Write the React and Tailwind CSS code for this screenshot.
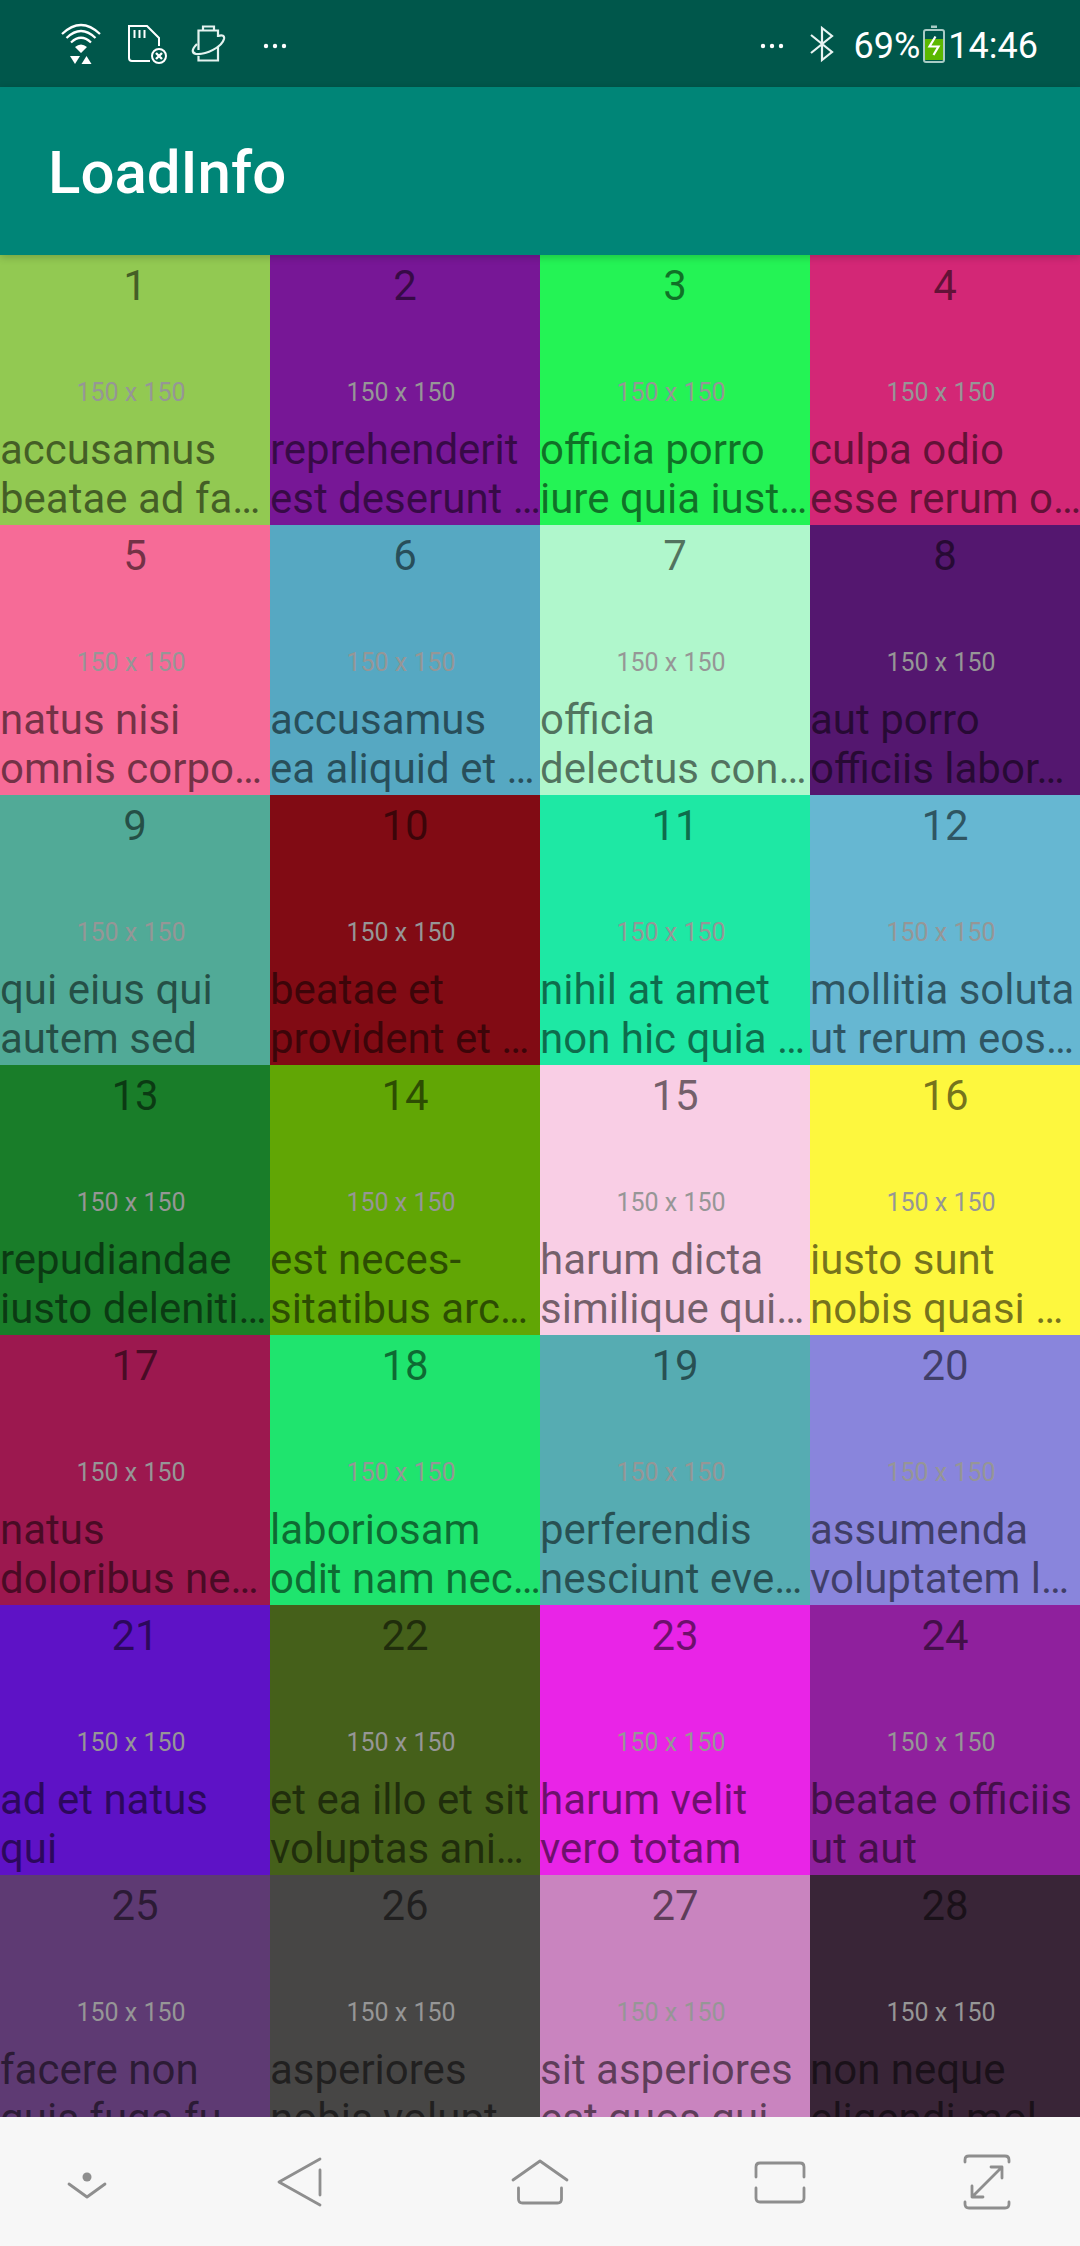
import React from "react";

const photos = [
  ["#92c952", "accusamus", "beatae ad fa…"],
  ["#771796", "reprehenderit", "est deserunt …"],
  ["#24f355", "officia porro", "iure quia iust…"],
  ["#d32776", "culpa odio", "esse rerum o…"],
  ["#f66b97", "natus nisi", "omnis corpo…"],
  ["#56a8c2", "accusamus", "ea aliquid et …"],
  ["#b0f7cc", "officia", "delectus con…"],
  ["#54176f", "aut porro", "officiis labor…"],
  ["#51aa97", "qui eius qui", "autem sed"],
  ["#810b14", "beatae et", "provident et …"],
  ["#1ee8a4", "nihil at amet", "non hic quia …"],
  ["#66b7d2", "mollitia soluta", "ut rerum eos…"],
  ["#197d29", "repudiandae", "iusto deleniti…"],
  ["#61a605", "est neces-", "sitatibus arc…"],
  ["#f9cee5", "harum dicta", "similique qui…"],
  ["#fdf73e", "iusto sunt", "nobis quasi …"],
  ["#9c184f", "natus", "doloribus ne…"],
  ["#1fe46e", "laboriosam", "odit nam nec…"],
  ["#56acb2", "perferendis", "nesciunt eve…"],
  ["#8985dc", "assumenda", "voluptatem l…"],
  ["#5e12c6", "ad et natus", "qui"],
  ["#45601a", "et ea illo et sit", "voluptas ani…"],
  ["#e924e7", "harum velit", "vero totam"],
  ["#8f209d", "beatae officiis", "ut aut"],
  ["#5e3a73", "facere non", "quis fuga fu…"],
  ["#474645", "asperiores", "nobis volupt…"],
  ["#c984bf", "sit asperiores", "est quos qui…"],
  ["#392537", "non neque", "eligendi mol…"],
];

function WifiIcon() {
  return (
    <svg width="40" height="42" viewBox="0 0 40 42" fill="none" stroke="#fff" strokeWidth="2.2">
      <path d="M1 11Q20-7 39 11M5.500 15Q20 1 34.500 15M10 19.500Q20 10 30 19.500" />
      <path d="M14 24Q20 19 26 24L20 30ZM9 33H19L14 41ZM20.500 41H30.500L25.500 33Z" fill="#fff" stroke="none" />
    </svg>
  );
}

function CardIcon() {
  return (
    <svg width="40" height="40" viewBox="0 0 40 40" fill="none" stroke="#fff" strokeWidth="2">
      <path d="M23 37H5Q2 37 2 34V2H20L32 14V22M7.500 6V14M12.500 6V14M17.500 6V14" />
      <circle cx="32" cy="32" r="7" />
      <path d="M29 29L35 35M35 29L29 35" strokeWidth="2.400" />
    </svg>
  );
}

function PowerIcon() {
  return (
    <svg width="36" height="38" viewBox="0 0 36 38" fill="none" stroke="#e4f3f0" strokeWidth="2.200">
      <path d="M12 5V1.500H23V5M7.500 25V5.500H27V12M27 22V35.500H7.500V31" />
      <path d="M27 11Q34 9 33 14C31 22 15 30 5 29Q-2 27 6 19" />
    </svg>
  );
}

function Dots() {
  return (
    <svg width="24" height="6" viewBox="0 0 24 6" fill="#fff">
      <circle cx="3" cy="3" r="2.200" />
      <circle cx="12" cy="3" r="2.200" />
      <circle cx="21" cy="3" r="2.200" />
    </svg>
  );
}

function BluetoothIcon() {
  return (
    <svg width="24" height="38" viewBox="0 0 24 38" fill="none" stroke="#e8f4f2" strokeWidth="2.200">
      <path d="M1 10L22 27L12 35V3L22 11L1 28" />
    </svg>
  );
}

function BatteryIcon() {
  return (
    <svg width="22" height="38" viewBox="0 0 22 38">
      <path d="M8 0.500H14V3H8Z" fill="#a9cbc5" />
      <rect x="1" y="5" width="20" height="32" rx="2" fill="none" stroke="#a9cbc5" strokeWidth="2" />
      <rect x="2" y="14" width="18" height="21" fill="#5cb800" />
      <path d="M12.500 11.500L6.500 21.500H15.500L10.500 30" fill="none" stroke="#fff" strokeWidth="2.200" />
    </svg>
  );
}

function NavButton({ label, inset, children }) {
  return (
    <button type="button" aria-label={label} className={inset ? "flex items-center justify-center pr-1.5" : "flex items-center justify-center"}>
      <svg width="60" height="60" viewBox="0 0 60 60" fill="none" stroke="#8e8e8e" strokeWidth="2.800" strokeLinecap="round" strokeLinejoin="round">
        {children}
      </svg>
    </button>
  );
}

function Tile({ number, color, first, second }) {
  return (
    <li
      className="flex aspect-square flex-col overflow-hidden pt-1.5 pb-0.5 text-[42px] leading-[49px] text-black/54"
      style={{ backgroundColor: color }}
    >
      <span className="text-center">{number}</span>
      <span className="flex flex-1 items-end justify-center pr-2 pb-4 text-[25px] leading-8 text-[#969696]">
        150 x 150
      </span>
      <p className="whitespace-nowrap">
        {first}
        <br />
        {second}
      </p>
    </li>
  );
}

export default function App() {
  return (
    <div className="flex h-screen flex-col overflow-hidden bg-[#fafafa] font-[Roboto,sans-serif]">
      <div className="flex h-[87px] shrink-0 items-center bg-[#00574b] pr-[42px] pl-[61px] text-[36px] leading-[42px] text-white">
        <WifiIcon />
        <span className="ml-[26px]"><CardIcon /></span>
        <span className="ml-6"><PowerIcon /></span>
        <span className="ml-9 pt-1"><Dots /></span>
        <span className="ml-auto pt-1"><Dots /></span>
        <span className="ml-[26px]"><BluetoothIcon /></span>
        <span className="ml-5 pt-1">69%</span>
        <span className="ml-[3px]"><BatteryIcon /></span>
        <span className="ml-[3px] pt-1">14:46</span>
      </div>
      <header className="z-10 flex h-[168px] shrink-0 items-center bg-[#008577] px-12 pt-1 shadow-[0_2px_8px_rgba(0,0,0,0.2)]">
        <h1 className="text-[60px] leading-[70px] font-medium text-white">LoadInfo</h1>
      </header>
      <main className="min-h-0 flex-1 overflow-hidden">
        <ul className="grid grid-cols-4">
          {photos.map(([color, first, second], i) => (
            <Tile key={i} number={i + 1} color={color} first={first} second={second} />
          ))}
        </ul>
      </main>
      <nav className="grid h-[129px] shrink-0 grid-cols-[180px_1fr_1fr_1fr_180px] bg-[#f7f7f7]">
        <NavButton label="Hide navigation bar" inset>
          <circle cx="30" cy="25" r="4.500" fill="#8e8e8e" stroke="none" />
          <path d="M12 32L30 45L48 32" />
        </NavButton>
        <NavButton label="Back">
          <path d="M50 7L9 30L50 53M50 18V43" />
        </NavButton>
        <NavButton label="Home">
          <path d="M3 28L30 9L57 28M8.500 36V47Q8.500 51 12.500 51H47.500Q51.500 51 51.500 47V36" />
        </NavButton>
        <NavButton label="Recent apps">
          <path d="M6 25V15Q6 11 10 11H50Q54 11 54 15V25M6 36V46Q6 50 10 50H50Q54 50 54 46V36" />
        </NavButton>
        <NavButton label="Full screen" inset>
          <path d="M8 10V8Q8 4 12 4H48Q52 4 52 8V10M8 50V52Q8 56 12 56H48Q52 56 52 52V50M15 45L45 15M34 15H45V26M15 34V45H26" />
        </NavButton>
      </nav>
    </div>
  );
}
